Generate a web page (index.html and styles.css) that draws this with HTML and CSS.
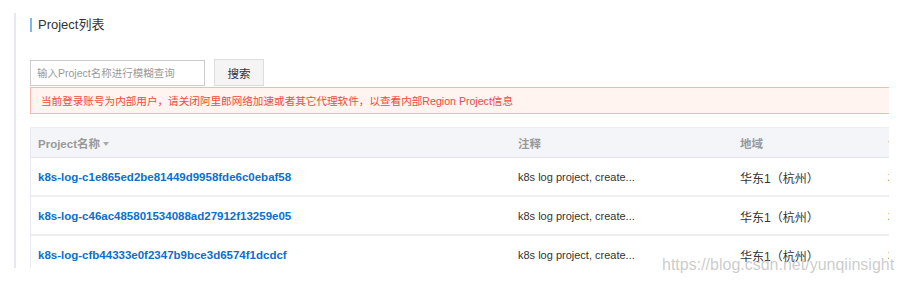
FILE: index.html
```html
<!DOCTYPE html>
<html lang="zh-CN">
<head>
  <meta charset="UTF-8">
  <title>Project列表</title>
  <link rel="stylesheet" href="styles.css">
</head>
<body>

<div class="page">
  <div class="panel">
    <h2 class="title">Project列表</h2>

    <div class="search">
      <input class="search-input" type="text" placeholder="输入Project名称进行模糊查询">
      <button class="search-btn">搜索</button>
    </div>

    <div class="alert">当前登录账号为内部用户，请关闭阿里郎网络加速或者其它代理软件，以查看内部Region Project信息</div>

    <div class="table-wrap">
      <div class="table">
        <div class="row head">
          <div class="cell">Project名称<span class="caret"></span></div>
          <div class="cell">注释</div>
          <div class="cell">地域</div>
          <div class="cell">创建时间</div>
        </div>
        <div class="row">
          <div class="cell"><a href="#" class="link">k8s-log-c1e865ed2be81449d9958fde6c0ebaf58</a></div>
          <div class="cell">k8s log project, create...</div>
          <div class="cell region">华东1（杭州）</div>
          <div class="cell">2019-01-01</div>
        </div>
        <div class="row">
          <div class="cell"><a href="#" class="link">k8s-log-c46ac485801534088ad27912f13259e05</a></div>
          <div class="cell">k8s log project, create...</div>
          <div class="cell region">华东1（杭州）</div>
          <div class="cell">2019-01-01</div>
        </div>
        <div class="row">
          <div class="cell"><a href="#" class="link">k8s-log-cfb44333e0f2347b9bce3d6574f1dcdcf</a></div>
          <div class="cell">k8s log project, create...</div>
          <div class="cell region">华东1（杭州）</div>
          <div class="cell">2019-01-01</div>
        </div>
      </div>
    </div>
  </div>
</div>

<div class="watermark">https://blog.csdn.net/yunqiinsight</div>

</body>
</html>
```

FILE: styles.css
```css
* {
  box-sizing: border-box;
  margin: 0;
  padding: 0;
}
body {
  font-family: "Liberation Sans", "Noto Sans CJK SC", sans-serif;
  font-size: 12px;
  color: #333;
  background: #fff;
  position: relative;
  height: 285px;
  overflow: hidden;
}

.page {
  padding: 13px 0 0 14px;
}
.panel {
  border-left: 2px solid #e6e8ee;
  padding-left: 14px;
  height: 255px;
  overflow: hidden;
}

.title {
  margin-top: 5px;
  border-left: 2px solid #7ab8f0;
  padding-left: 6px;
  font-size: 13px;
  font-weight: normal;
  line-height: 14px;
  color: #333;
}

/* search bar */
.search {
  display: flex;
  gap: 9px;
  margin-top: 28px;
  align-items: flex-start;
}
.search-input {
  width: 175px;
  height: 26px;
  border: 1px solid #ccc;
  padding: 0 6px;
  font-family: inherit;
  font-size: 10.5px;
  outline: none;
}
.search-input::placeholder {
  color: #999;
}
.search-btn {
  width: 50px;
  height: 27px;
  margin-top: -1px;
  background: #f4f4f4;
  border: 1px solid #ddd;
  font-family: inherit;
  font-size: 11.5px;
  color: #333;
}

.alert {
  width: 859px;
  height: 27px;
  margin-top: 1px;
  background: #fff4f0;
  border: 1px solid #f6b8b3;
  border-right: none;
  padding-left: 10px;
  line-height: 26px;
  font-size: 10.6px;
  color: #f04a3c;
}

/* table */
.table-wrap {
  width: 859px;
  margin-top: 13px;
  overflow: hidden;
  border-left: 1px solid #e8eaf0;
}
.table {
  width: 1100px;
}
.row {
  display: grid;
  grid-template-columns: 480px 222px 148px 250px;
  height: 39px;
  padding-top: 1px;
  align-items: center;
  border-bottom: 2px solid #eceef2;
  font-size: 11px;
}
.row.head {
  height: 31px;
  padding-top: 0;
  background: #f4f5f9;
  border-top: 1px solid #eceef3;
  border-bottom: 1px solid #e3e5ea;
  color: #999;
  font-weight: bold;
  font-size: 11.5px;
}
.cell {
  padding-left: 7px;
  white-space: nowrap;
}
.region {
  font-size: 12px;
}
.caret {
  display: inline-block;
  margin-left: 3px;
  vertical-align: middle;
  border-left: 3.5px solid transparent;
  border-right: 3.5px solid transparent;
  border-top: 4px solid #aaa;
}
.link {
  color: #0a6fcf;
  font-weight: bold;
  font-size: 11.5px;
  text-decoration: none;
}

.watermark {
  position: absolute;
  left: 662px;
  top: 256px;
  font-size: 16px;
  color: rgba(160, 160, 160, 0.55);
  white-space: nowrap;
}
```
